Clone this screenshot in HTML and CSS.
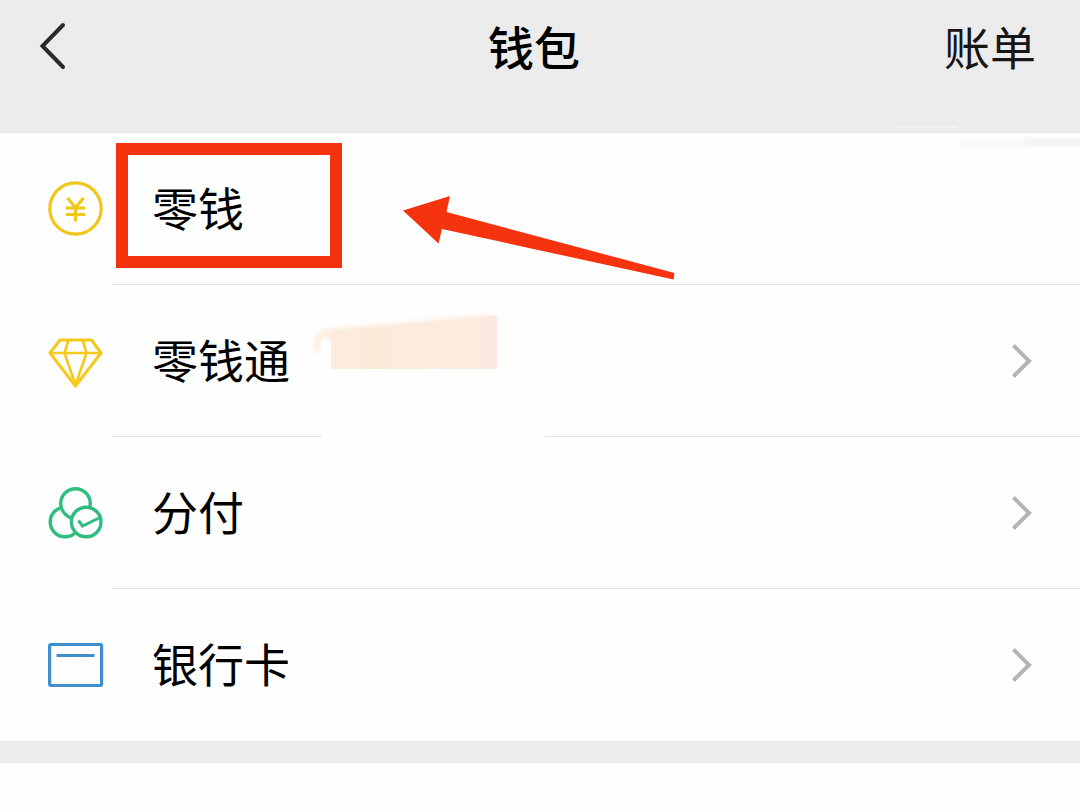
FILE: index.html
```html
<!DOCTYPE html>
<html lang="zh-CN">
<head>
  <meta charset="UTF-8">
  <meta name="viewport" content="width=device-width, initial-scale=1.0">
  <title>钱包</title>
  <link rel="stylesheet" href="styles.css">
</head>
<body>
  <header class="navbar">
    <button type="button" class="btn-back" aria-label="返回">
      <svg width="40" height="56" viewBox="0 0 40 56" aria-hidden="true">
        <path d="M31 5 L10.500 26 L31 47" fill="none" stroke="#2b2b2b" stroke-width="4" stroke-linecap="round"/>
      </svg>
    </button>
    <h1 class="title">钱包</h1>
    <a href="#" class="bill">账单</a>
    <svg class="streak" width="184" height="24" viewBox="0 0 184 24" aria-hidden="true">
      <defs>
        <filter id="haze" x="-10%" y="-50%" width="120%" height="200%">
          <feGaussianBlur stdDeviation="1.5"/>
        </filter>
      </defs>
      <rect x="0" y="0" width="62" height="2" fill="#f4f4f4"/>
      <rect x="64" y="14" width="130" height="7" fill="#f9f9f9" filter="url(#haze)"/>
      <rect x="128" y="12" width="66" height="8" fill="#f4f4f4" filter="url(#haze)"/>
    </svg>
  </header>

  <main>
    <ul class="menu">
      <li>
        <a href="#" class="row">
          <svg class="icon" width="56" height="56" viewBox="0 0 56 56" fill="none" stroke="#f2c71c" aria-hidden="true">
            <circle cx="27.5" cy="27.5" r="25.7" stroke-width="3.2"/>
            <path d="M19.5 17 L27.5 26.5 L35.5 17 M18 27 H37 M18 33.5 H37 M27.5 26.5 V40.5" stroke-width="3.200"/>
          </svg>
          <span class="cell">
            <span class="label">零钱</span>
          </span>
        </a>
        <div class="highlight"></div>
        <svg class="arrow" width="280" height="90" viewBox="0 0 280 90" aria-hidden="true">
          <path d="M3 16.500 L50 2 L46.500 18 L274.500 79 L273.500 85.500 L42 35 L38.500 49.500 Z" fill="#f5330f"/>
        </svg>
      </li>
      <li>
        <a href="#" class="row">
          <svg class="icon" width="56" height="56" viewBox="0 0 56 56" fill="none" stroke="#f3c91c" stroke-width="3" stroke-linejoin="round" aria-hidden="true">
            <path d="M12 7 H43.500 L53 20 L27.500 53 L2 20 Z"/>
            <path d="M2 20 H53 M20.500 7 L16.500 20 L27.500 52 L38.500 20 L34.500 7" stroke-width="2.6"/>
          </svg>
          <span class="cell">
            <span class="label">零钱通</span>
            <svg class="chevron" width="24" height="40" viewBox="0 0 24 40" aria-hidden="true">
              <path d="M3.500 4.500 L19 20 L3.500 35.500"/>
            </svg>
          </span>
        </a>
        <svg class="smudge" width="240" height="150" viewBox="0 0 240 150" aria-hidden="true">
          <defs>
            <linearGradient id="peach" x1="0" x2="1" y1="0" y2="0">
              <stop offset="0" stop-color="#fdecdf"/>
              <stop offset="0.25" stop-color="#fdead9"/>
              <stop offset="0.6" stop-color="#fcebdf"/>
              <stop offset="1" stop-color="#fceae0"/>
            </linearGradient>
            <filter id="soft" x="-20%" y="-20%" width="140%" height="140%">
              <feGaussianBlur stdDeviation="2"/>
            </filter>
          </defs>
          <rect x="12" y="60" width="223" height="84" fill="#fefefe"/>
          <path d="M4 24 L14 18 L60 14 L140 7 L180 3 V30 H22 L12 26 L8 42 L4 40 Z" fill="#fcefe2" filter="url(#soft)"/>
          <path d="M21 20 L90 13 L150 8 L187 4 V58 H21 Z" fill="url(#peach)"/>
        </svg>
      </li>
      <li>
        <a href="#" class="row">
          <svg class="icon overlap" width="56" height="56" viewBox="0 0 56 56" stroke="#2fbd80" stroke-width="3.400" aria-hidden="true">
            <circle cx="17" cy="37" r="14.800"/>
            <circle cx="27.500" cy="18.500" r="14.800"/>
            <circle cx="38.200" cy="37" r="14.800"/>
            <path d="M30.500 35.500 L34.500 41 L51 33" fill="none" stroke-width="3"/>
          </svg>
          <span class="cell">
            <span class="label">分付</span>
            <svg class="chevron" width="24" height="40" viewBox="0 0 24 40" aria-hidden="true">
              <path d="M3.500 4.500 L19 20 L3.500 35.500"/>
            </svg>
          </span>
        </a>
      </li>
      <li>
        <a href="#" class="row">
          <svg class="icon" width="56" height="56" viewBox="0 0 56 56" fill="none" stroke="#3e8fcd" stroke-width="3.200" aria-hidden="true">
            <rect x="1.600" y="7.500" width="52" height="41" rx="1.500"/>
            <path d="M8.500 18.500 H46.500" stroke-width="3"/>
          </svg>
          <span class="cell">
            <span class="label">银行卡</span>
            <svg class="chevron" width="24" height="40" viewBox="0 0 24 40" aria-hidden="true">
              <path d="M3.500 4.500 L19 20 L3.500 35.500"/>
            </svg>
          </span>
        </a>
      </li>
    </ul>
  </main>
</body>
</html>
```

FILE: styles.css
```css
:root {
  --font-family: "Noto Sans CJK SC", sans-serif;
  --bar-bg: #ececec;
  --page-bg: #fefefe;
  --line: #e4e4e4;
  --text: #000;
  --mark: #f5330f;
}
* {
  box-sizing: border-box;
  margin: 0;
  padding: 0;
  font-family: var(--font-family);
}
body {
  background: var(--page-bg);
  color: var(--text);
  font-size: 46px;
  line-height: 58px;
}
a {
  color: inherit;
  text-decoration: none;
}
.navbar {
  position: relative;
  display: grid;
  grid-template-columns: 1fr auto 1fr;
  align-items: start;
  padding: 16px 44px 59px 32px;
  background: var(--bar-bg);
}
.btn-back {
  justify-self: start;
  display: block;
  height: 56px;
  padding-top: 4px;
  background: none;
  border: none;
  cursor: pointer;
}
.btn-back svg {
  display: block;
}
.title {
  font-size: 46px;
  font-weight: 500;
}
.bill {
  justify-self: end;
  color: #161616;
}
.streak {
  position: absolute;
  right: 0;
  top: 126px;
}
.menu {
  list-style: none;
  border-bottom: 22px solid var(--bar-bg);
}
.menu li {
  position: relative;
}
.row {
  display: flex;
  align-items: center;
  gap: 8px;
  padding-left: 48px;
}
.icon {
  flex: none;
}
.overlap {
  fill: var(--page-bg);
}
.cell {
  flex: 1;
  display: flex;
  justify-content: space-between;
  align-items: center;
  padding: 44px 46px 43px 40px;
  border-bottom: 1px solid var(--line);
}
.label {
  padding-bottom: 6px;
}
.menu li:last-child .cell {
  border-color: transparent;
}
.chevron {
  fill: none;
  stroke: #b4b4b4;
  stroke-width: 4;
}
/* frame and arrow lie over the first row */
.highlight {
  position: absolute;
  left: 116px;
  top: 10px;
  width: 226px;
  height: 125px;
  border: 12px solid var(--mark);
}
.arrow {
  position: absolute;
  left: 400px;
  top: 61px;
}
.smudge {
  position: absolute;
  left: 310px;
  top: 26px;
}
```
